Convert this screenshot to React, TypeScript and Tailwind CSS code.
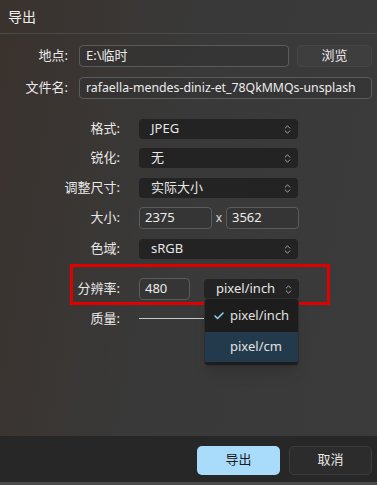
import { ChevronsUpDown, Check } from 'lucide-react';

const font = { fontFamily: '"Noto Sans", "Noto Sans CJK SC", sans-serif' };

function Select({ value, width = 'w-[159px]' }: { value: string; width?: string }) {
  return (
    <div className={`${width} h-[20px] rounded-[4px] bg-[#232323] flex items-center justify-between pl-[12px] pr-[5px] text-[13px] text-[#e6e6e6]`}>
      <span>{value}</span>
      <ChevronsUpDown size={11} strokeWidth={1.6} className="text-[#d0d0d0]" />
    </div>
  );
}

function Input({ value, className = '', size = 'text-[13px]' }: { value: string; className?: string; size?: string }) {
  return (
    <div className={`h-[22px] rounded-[4px] border border-[#5b5b5b] bg-[#2f2f2f]/40 flex items-center px-[6px] text-[#ececec] whitespace-nowrap overflow-hidden ${size} ${className}`}>
      {value}
    </div>
  );
}

function Row({ label, children, className = '' }: { label: string; children: React.ReactNode; className?: string }) {
  return (
    <div className={`flex items-center ${className}`}>
      <div className="w-[120px] text-right text-[13px] text-[#e8e8e8]">{label}</div>
      <div className="ml-[19px] flex items-center">{children}</div>
    </div>
  );
}

export default function App() {
  return (
    <div
      className="relative w-[377px] h-[485px] flex flex-col overflow-hidden bg-[linear-gradient(100deg,#3a322d_0%,#393939_45%,#3b3b3c_100%)] text-[#e8e8e8]"
      style={font}
    >
      <div className="h-[34px] shrink-0 border-b border-[#4b4b4b] flex items-center px-[8px] text-[14px] text-[#f0f0f0]">
        导出
      </div>

      <div className="flex-1 pt-[11px]">
        <div className="flex items-center">
          <div className="w-[68px] text-right text-[13px]">地点:</div>
          <Input value="E:\临时" className="ml-[11px] w-[210px]" />
          <div className="ml-[8px] w-[75px] h-[22px] rounded-[4px] bg-[#3e3e3e] border border-[#454545] flex items-center justify-center text-[13px]">
            浏览
          </div>
        </div>
        <div className="flex items-center mt-[10px]">
          <div className="w-[68px] text-right text-[13px]">文件名:</div>
          <Input value="rafaella-mendes-diniz-et_78QkMMQs-unsplash" className="ml-[11px] w-[293px]" size="text-[12.3px]" />
        </div>

        <Row label="格式:" className="mt-[20px]">
          <Select value="JPEG" />
        </Row>
        <Row label="锐化:" className="mt-[9px]">
          <Select value="无" />
        </Row>
        <Row label="调整尺寸:" className="mt-[10px]">
          <Select value="实际大小" />
        </Row>
        <Row label="大小:" className="mt-[9px]">
          <Input value="2375" className="w-[73px] pl-[5px]" />
          <span className="w-[14px] text-center text-[12px] text-[#ddd]">x</span>
          <Input value="3562" className="w-[73px] pl-[5px]" />
        </Row>
        <Row label="色域:" className="mt-[10px]">
          <Select value="sRGB" />
        </Row>
        <Row label="分辨率:" className="mt-[19px]">
          <Input value="480" className="w-[51px] h-[21px] pl-[5px]" />
          <div className="ml-[14px]">
            <Select value="pixel/inch" width="w-[95px]" />
          </div>
        </Row>
        <Row label="质量:" className="mt-[9px]">
          <div className="w-[66px] h-px bg-[#c8c8c8]" />
        </Row>
      </div>

      <div className="h-[49px] shrink-0 bg-[#272727] flex items-center justify-end gap-[9px] pr-[5px] pt-[2px] border-b-[3px] border-[#4a4a4a]">
        <div className="w-[83px] h-[29px] rounded-[5px] bg-[#a9dcfa] flex items-center justify-center text-[13px] text-[#1c1c1c]">
          导出
        </div>
        <div className="w-[83px] h-[29px] rounded-[5px] bg-[#2c2c2c] border border-[#3c3c3c] flex items-center justify-center text-[13px]">
          取消
        </div>
      </div>

      {/* annotation box */}
      <div className="absolute left-[70px] top-[264px] w-[260px] h-[41px] border-[3px] border-[#e00000]" />

      {/* open dropdown */}
      <div className="absolute left-[204px] top-[298px] w-[95px] h-[68px] rounded-[4px] bg-[#1d1d1d] border border-[#2e2e2e] shadow-lg overflow-hidden text-[13px]">
        <div className="h-[33px] flex items-center text-[#e0e0e0]">
          <Check size={12} strokeWidth={3.2} className="ml-[8px] text-[#8ecbf0]" />
          <span className="ml-[5px]">pixel/inch</span>
        </div>
        <div className="h-[30px] bg-[#233a4c] flex items-center text-[#e0e0e0]">
          <span className="ml-[25px]">pixel/cm</span>
        </div>
      </div>
    </div>
  );
}
